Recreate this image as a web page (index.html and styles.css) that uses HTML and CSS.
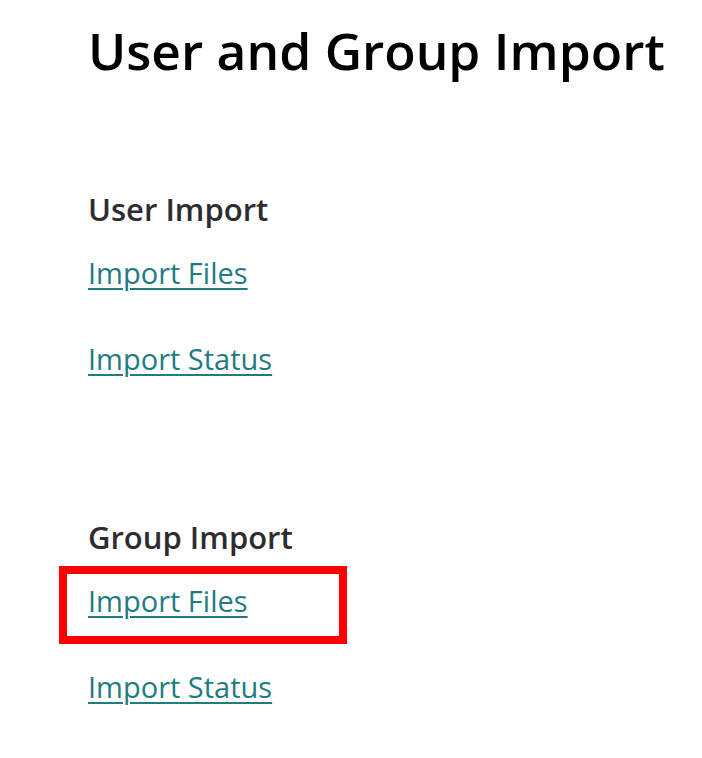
FILE: index.html
```html
<!DOCTYPE html>
<html lang="en">
<head>
  <meta charset="UTF-8" />
  <title>User and Group Import</title>
  <link rel="stylesheet" href="styles.css">
</head>
<body>
  <div class="page">
    <h1>User and Group Import</h1>

    <section class="import-block">
      <h2>User Import</h2>
      <ul class="links">
        <li><a href="#">Import Files</a></li>
        <li><a href="#">Import Status</a></li>
      </ul>
    </section>

    <section class="import-block">
      <h2>Group Import</h2>
      <ul class="links">
        <li class="highlighted"><a href="#">Import Files</a></li>
        <li><a href="#">Import Status</a></li>
      </ul>
    </section>
  </div>
</body>
</html>
```

FILE: styles.css
```css
*, *::before, *::after {
  box-sizing: border-box;
}

body {
  margin: 0;
  background: #ffffff;
  font-family: "Open Sans", "Noto Sans", sans-serif;
  color: #000000;
}

.page {
  padding: 10px 0 0 88px;
}

h1 {
  margin: 0;
  font-size: 51.5px;
  font-weight: 600;
  line-height: 80px;
}

.import-block {
  margin-top: 97px;
}

.import-block + .import-block {
  margin-top: 136px;
}

h2 {
  margin: 0;
  font-size: 31px;
  font-weight: 600;
  line-height: 44px;
  color: #2d2c30;
}

.links {
  list-style: none;
  margin: 0;
  padding: 0;
}

.links li {
  position: relative;
  font-size: 29px;
  line-height: 40px;
  margin-top: 22px;
}

.links li + li {
  margin-top: 46px;
}

.links a {
  color: #1f7c83;
  text-decoration: underline;
  text-underline-offset: 4px;
  text-decoration-thickness: 2px;
}

.highlighted::after {
  content: "";
  position: absolute;
  left: -29px;
  top: -15px;
  width: 288px;
  height: 78px;
  border: 8px solid #ff0000;
}
```
